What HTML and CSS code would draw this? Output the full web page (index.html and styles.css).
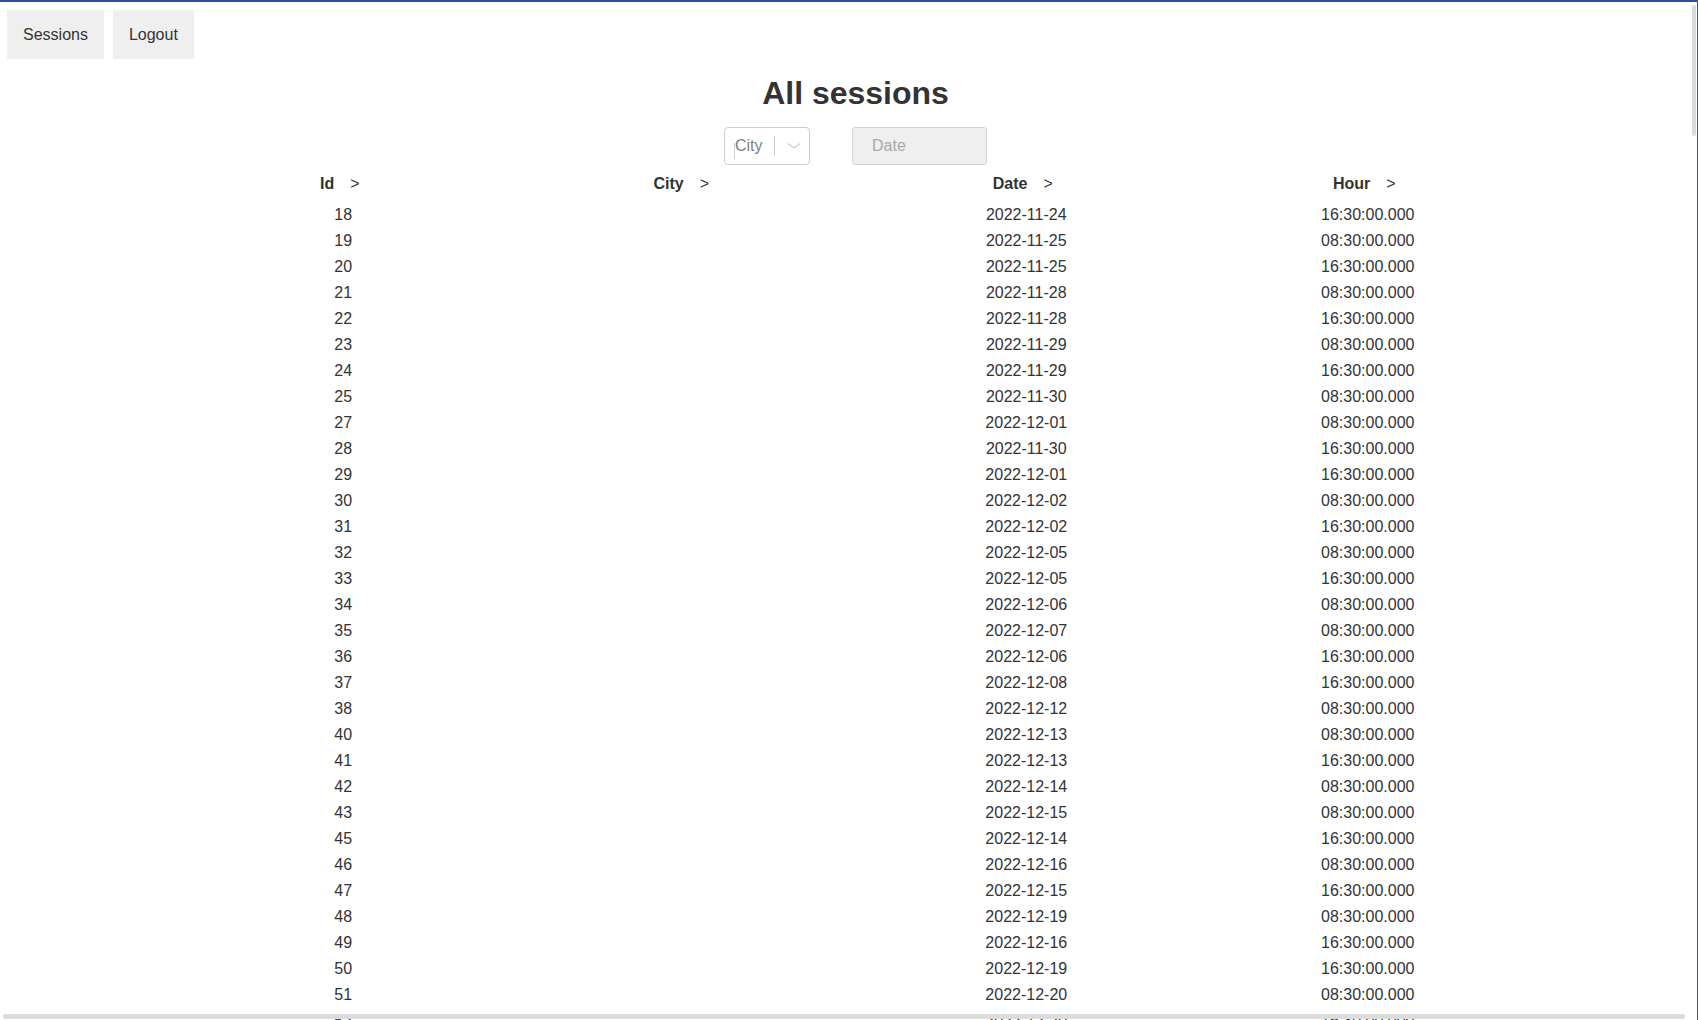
FILE: index.html
```html
<!DOCTYPE html>
<html lang="en">
<head>
<meta charset="utf-8">
<title>All sessions</title>
<link rel="stylesheet" href="styles.css">
</head>
<body>
<nav class="nav">
  <button class="nav-btn">Sessions</button>
  <button class="nav-btn">Logout</button>
</nav>
<main class="content">
  <h1 class="title">All sessions</h1>
  <div class="filters">
    <div class="select">
      <span class="caret"></span>
      <span class="placeholder">City</span>
      <span class="sep"></span>
      <svg class="chev" width="16" height="8" viewBox="0 0 16 8"><polyline points="2,1.5 8,6 14,1.5" fill="none" stroke="#cfcfcf" stroke-width="1.3"/></svg>
    </div>
    <div class="date">Date</div>
  </div>
  <div class="table">
    <div class="row head">
      <div class="cell">Id<span class="sort">&gt;</span></div>
      <div class="cell">City<span class="sort">&gt;</span></div>
      <div class="cell">Date<span class="sort">&gt;</span></div>
      <div class="cell">Hour<span class="sort">&gt;</span></div>
    </div>
    <div class="body">
      <div class="row"><div class="cell">18</div><div class="cell"></div><div class="cell">2022-11-24</div><div class="cell">16:30:00.000</div></div>
      <div class="row"><div class="cell">19</div><div class="cell"></div><div class="cell">2022-11-25</div><div class="cell">08:30:00.000</div></div>
      <div class="row"><div class="cell">20</div><div class="cell"></div><div class="cell">2022-11-25</div><div class="cell">16:30:00.000</div></div>
      <div class="row"><div class="cell">21</div><div class="cell"></div><div class="cell">2022-11-28</div><div class="cell">08:30:00.000</div></div>
      <div class="row"><div class="cell">22</div><div class="cell"></div><div class="cell">2022-11-28</div><div class="cell">16:30:00.000</div></div>
      <div class="row"><div class="cell">23</div><div class="cell"></div><div class="cell">2022-11-29</div><div class="cell">08:30:00.000</div></div>
      <div class="row"><div class="cell">24</div><div class="cell"></div><div class="cell">2022-11-29</div><div class="cell">16:30:00.000</div></div>
      <div class="row"><div class="cell">25</div><div class="cell"></div><div class="cell">2022-11-30</div><div class="cell">08:30:00.000</div></div>
      <div class="row"><div class="cell">27</div><div class="cell"></div><div class="cell">2022-12-01</div><div class="cell">08:30:00.000</div></div>
      <div class="row"><div class="cell">28</div><div class="cell"></div><div class="cell">2022-11-30</div><div class="cell">16:30:00.000</div></div>
      <div class="row"><div class="cell">29</div><div class="cell"></div><div class="cell">2022-12-01</div><div class="cell">16:30:00.000</div></div>
      <div class="row"><div class="cell">30</div><div class="cell"></div><div class="cell">2022-12-02</div><div class="cell">08:30:00.000</div></div>
      <div class="row"><div class="cell">31</div><div class="cell"></div><div class="cell">2022-12-02</div><div class="cell">16:30:00.000</div></div>
      <div class="row"><div class="cell">32</div><div class="cell"></div><div class="cell">2022-12-05</div><div class="cell">08:30:00.000</div></div>
      <div class="row"><div class="cell">33</div><div class="cell"></div><div class="cell">2022-12-05</div><div class="cell">16:30:00.000</div></div>
      <div class="row"><div class="cell">34</div><div class="cell"></div><div class="cell">2022-12-06</div><div class="cell">08:30:00.000</div></div>
      <div class="row"><div class="cell">35</div><div class="cell"></div><div class="cell">2022-12-07</div><div class="cell">08:30:00.000</div></div>
      <div class="row"><div class="cell">36</div><div class="cell"></div><div class="cell">2022-12-06</div><div class="cell">16:30:00.000</div></div>
      <div class="row"><div class="cell">37</div><div class="cell"></div><div class="cell">2022-12-08</div><div class="cell">16:30:00.000</div></div>
      <div class="row"><div class="cell">38</div><div class="cell"></div><div class="cell">2022-12-12</div><div class="cell">08:30:00.000</div></div>
      <div class="row"><div class="cell">40</div><div class="cell"></div><div class="cell">2022-12-13</div><div class="cell">08:30:00.000</div></div>
      <div class="row"><div class="cell">41</div><div class="cell"></div><div class="cell">2022-12-13</div><div class="cell">16:30:00.000</div></div>
      <div class="row"><div class="cell">42</div><div class="cell"></div><div class="cell">2022-12-14</div><div class="cell">08:30:00.000</div></div>
      <div class="row"><div class="cell">43</div><div class="cell"></div><div class="cell">2022-12-15</div><div class="cell">08:30:00.000</div></div>
      <div class="row"><div class="cell">45</div><div class="cell"></div><div class="cell">2022-12-14</div><div class="cell">16:30:00.000</div></div>
      <div class="row"><div class="cell">46</div><div class="cell"></div><div class="cell">2022-12-16</div><div class="cell">08:30:00.000</div></div>
      <div class="row"><div class="cell">47</div><div class="cell"></div><div class="cell">2022-12-15</div><div class="cell">16:30:00.000</div></div>
      <div class="row"><div class="cell">48</div><div class="cell"></div><div class="cell">2022-12-19</div><div class="cell">08:30:00.000</div></div>
      <div class="row"><div class="cell">49</div><div class="cell"></div><div class="cell">2022-12-16</div><div class="cell">16:30:00.000</div></div>
      <div class="row"><div class="cell">50</div><div class="cell"></div><div class="cell">2022-12-19</div><div class="cell">16:30:00.000</div></div>
      <div class="row"><div class="cell">51</div><div class="cell"></div><div class="cell">2022-12-20</div><div class="cell">08:30:00.000</div></div>
      <div class="row"><div class="cell">52</div><div class="cell"></div><div class="cell">2022-12-20</div><div class="cell">16:30:00.000</div></div>
    </div>
  </div>
</main>
<div class="vscroll"></div>
<div class="hscroll"></div>
<div class="edge"></div>
</body>
</html>
```

FILE: styles.css
```css
html {
  overflow: hidden;
  border-top: 2px solid #2c4e9d;
  background: #fff;
}

body {
  margin: 0;
  padding: 8px 0 0 7px;
  font-family: "Liberation Sans", Arial, sans-serif;
  font-size: 16px;
  color: #333;
}

.nav {
  display: flex;
  gap: 9px;
}

.nav-btn {
  font-family: "Liberation Sans", Arial, sans-serif;
  font-size: 16px;
  color: #333;
  background: #efefef;
  border: none;
  border-radius: 0;
  padding: 0 16px;
  height: 49px;
  line-height: 18px;
}

.content {
  padding-left: 6px;
}

.title {
  margin: 16px 0 15px;
  font-size: 32px;
  line-height: 37px;
  font-weight: bold;
  text-align: center;
  color: #333;
}

.filters {
  display: flex;
  justify-content: center;
  gap: 42px;
  height: 38px;
}

.select {
  position: relative;
  box-sizing: border-box;
  width: 86px;
  height: 38px;
  border: 1px solid #ccc;
  border-radius: 4px;
  display: flex;
  align-items: center;
}

.placeholder {
  margin-left: 10px;
  color: #808080;
  line-height: 18px;
}

.caret {
  position: absolute;
  left: 9px;
  top: 15px;
  width: 1px;
  height: 16px;
  background: #d0d0d0;
}

.sep {
  margin-left: 11px;
  width: 1px;
  height: 20px;
  background: #ccc;
}

.chev {
  margin-left: 11px;
  display: block;
}

.date {
  box-sizing: border-box;
  width: 135px;
  height: 38px;
  background: #efefef;
  border: 1px solid #d4d4d4;
  border-radius: 3px;
  padding-left: 19px;
  display: flex;
  align-items: center;
  color: #a9a9a9;
}

.table {
  width: 1366px;
  margin: 6px auto 0;
}

.row {
  display: grid;
  grid-template-columns: repeat(4, 1fr);
  height: 26px;
  align-items: center;
  text-align: center;
  line-height: 18px;
}

.head {
  font-weight: bold;
  margin-bottom: 5px;
}

.sort {
  font-weight: normal;
  margin-left: 16px;
  padding-right: 7px;
}

.vscroll {
  position: fixed;
  left: 1692px;
  top: 5px;
  width: 4px;
  height: 131px;
  background: #dadada;
  border-radius: 2px;
}

.hscroll {
  position: fixed;
  left: 3px;
  top: 1014px;
  width: 1682px;
  height: 5px;
  background: #dcdcdc;
  border-radius: 2px;
}

.edge {
  position: fixed;
  right: 0;
  top: 0;
  width: 1px;
  height: 100%;
  background: #3b5a96;
}
```
